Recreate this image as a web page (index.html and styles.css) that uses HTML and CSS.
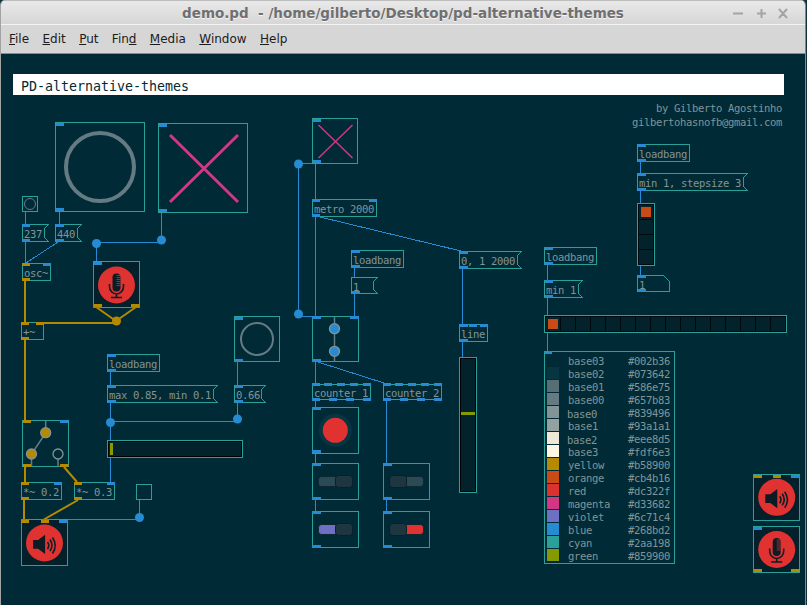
FILE: index.html
```html
<!DOCTYPE html>
<html lang="en">
<head>
<meta charset="utf-8">
<title>demo.pd - /home/gilberto/Desktop/pd-alternative-themes</title>
<link rel="stylesheet" href="styles.css">
</head>
<body>
<div class="window">
  <header class="titlebar">
    <span class="title">demo.pd&nbsp; - /home/gilberto/Desktop/pd-alternative-themes</span>
    <svg class="controls" width="60" height="12" viewBox="0 0 60 12">
      <path d="M0 6.500h10M24 6.500h9M28.500 2v9M46 2l8 9M54 2l-8 9"/>
    </svg>
  </header>
  <nav class="menubar">
    <span><u>F</u>ile</span>
    <span><u>E</u>dit</span>
    <span><u>P</u>ut</span>
    <span>Fin<u>d</u></span>
    <span><u>M</u>edia</span>
    <span><u>W</u>indow</span>
    <span><u>H</u>elp</span>
  </nav>
  <main class="canvas">
    <svg class="patch" width="807" height="551" viewBox="0 54 807 551">
      <defs>
        <g id="mic">
          <circle class="red" r="18.500"/>
          <rect class="glyph" x="-4" y="-11.500" width="8" height="18" rx="4"/>
          <path class="slits" d="M0 -9.500h4M0 -7.500h4M0 -5.500h4M0 -3.500h4M0 -1.500h4M0 .5h4"/>
          <path class="glyphline" d="M-7 -1v2.500a7 7.500 0 0 0 14 0v-2.500M0 9v3.500M-5.500 12.500h11"/>
        </g>
        <g id="speaker">
          <circle class="red" r="18.500"/>
          <path class="glyph" d="M-11.400 -3h5l7 -5.300v19.300l-7 -5.300h-5z"/>
          <path class="glypharc" d="M3 -1q2.500 3.500 0 7M5.500 -3.500q4 6 0 11.500M8 -5.500q5.500 8 0 16"/>
        </g>
      </defs>

      <!-- wires -->
      <path class="wire" d="M25.500 212V224M25.500 242V263M59.500 211V224M161.500 212V242M96.500 243V262M96 242.500H161M298.500 164V314M298 163.500H312M298 316.500H312M315.500 163V199M315.500 217V316M315.500 362V383M315.500 401V407M315.500 454V463M315.500 500V511M386.500 401V463M386.500 500V511M354.500 268V277M354.500 294V316M462.500 269V324M462.500 342V357M110.500 372V385M110.500 403V482M110 421.500H237M237.500 362V385M237.500 403V420M139.500 500V518M68 519.500H139M640.500 162V173M640.500 191V204M640.500 266V275M547.500 265V280M547.500 298V315M547.500 333V351"/>
      <path class="wire" d="M58 242L26 263M320 217L461 251M318 362L387 384"/>
      <path class="signal" d="M25 281V322M36 322.500H116M25 340V420M25 467V482M24 500V520"/>
      <path class="signal thin" d="M96 307L116 321M136 307L116 321M64 467L77 482M78 500L43 520"/>
      <circle class="dot" cx="161.500" cy="240" r="4.500"/>
      <circle class="dot" cx="96.500" cy="243.500" r="4.500"/>
      <circle class="dot" cx="298.500" cy="164" r="4.500"/>
      <circle class="dot" cx="298.500" cy="314" r="4.500"/>
      <circle class="dot" cx="110.500" cy="422.500" r="4.500"/>
      <circle class="dot" cx="237.500" cy="419" r="4.500"/>
      <circle class="dot" cx="139.500" cy="517.500" r="4.500"/>
      <circle class="dot gold" cx="116.500" cy="321" r="4.500"/>

      <!-- title -->
      <rect class="banner" x="13" y="74" width="771" height="21"/>
      <text class="bannertext" x="21" y="91">PD-alternative-themes</text>
      <text class="t end" x="782" y="112">by Gilberto Agostinho</text>
      <text class="t end" x="782" y="126">gilbertohasnofb@gmail.com</text>

      <!-- display canvases -->
      <rect class="box" x="55.500" y="122.500" width="89" height="89"/>
      <circle class="ring" cx="100" cy="167" r="34"/>
      <rect class="b" x="56" y="123" width="8" height="3"/><rect class="b" x="56" y="208" width="8" height="3"/>

      <rect class="box" x="158.500" y="123.500" width="89" height="89"/>
      <path class="cross" d="M170 135L238 202M238 135L170 202"/>
      <rect class="b" x="159" y="124" width="8" height="3"/><rect class="b" x="159" y="209" width="8" height="3"/>

      <rect class="box" x="22.500" y="196.500" width="15" height="15"/>
      <circle class="ring fine" cx="30" cy="204" r="5.500"/>

      <polygon class="box" points="22.500,224.500 48.500,224.500 44.500,228.500 44.500,237.500 48.500,241.500 22.500,241.500"/>
      <text class="t" x="24" y="238">237</text>
      <rect class="b" x="22" y="224" width="8" height="3"/><rect class="b" x="22" y="239" width="8" height="3"/>

      <polygon class="box" points="55.500,224.500 81.500,224.500 77.500,228.500 77.500,237.500 81.500,241.500 55.500,241.500"/>
      <text class="t" x="57" y="238">440</text>
      <rect class="b" x="56" y="224" width="8" height="3"/><rect class="b" x="56" y="239" width="8" height="3"/>

      <rect class="box" x="22.500" y="263.500" width="28" height="17"/>
      <text class="t" x="24" y="277">osc~</text>
      <rect class="g" x="22" y="263" width="8" height="3"/><rect class="b" x="43" y="263" width="8" height="3"/><rect class="g" x="22" y="278" width="8" height="3"/>

      <rect class="box dark" x="93.500" y="261.500" width="46" height="46"/>
      <use href="#mic" x="116.500" y="285"/>
      <rect class="b" x="94" y="262" width="8" height="3"/><rect class="g" x="94" y="304" width="8" height="3"/><rect class="g" x="131" y="304" width="8" height="3"/>

      <rect class="box" x="21.500" y="322.500" width="22" height="17"/>
      <text class="t" x="23" y="336">+~</text>
      <rect class="g" x="21" y="322" width="8" height="3"/><rect class="g" x="36" y="322" width="8" height="3"/><rect class="g" x="21" y="337" width="8" height="3"/>

      <rect class="box" x="234.500" y="316.500" width="45" height="45"/>
      <circle class="ring medium" cx="257" cy="339" r="16"/>
      <rect class="b" x="235" y="317" width="8" height="3"/><rect class="b" x="235" y="359" width="8" height="3"/>

      <rect class="box" x="107.500" y="354.500" width="52" height="17"/>
      <text class="t" x="109" y="368">loadbang</text>
      <rect class="b" x="108" y="354" width="8" height="3"/><rect class="b" x="108" y="369" width="8" height="3"/>

      <polygon class="box" points="107.500,385.500 217.500,385.500 213.500,389.500 213.500,398.500 217.500,402.500 107.500,402.500"/>
      <text class="t" x="109" y="399">max 0.85, min 0.1</text>
      <rect class="b" x="108" y="385" width="8" height="3"/><rect class="b" x="108" y="400" width="8" height="3"/>

      <polygon class="box" points="234.500,385.500 265.500,385.500 261.500,389.500 261.500,398.500 265.500,402.500 234.500,402.500"/>
      <text class="t" x="236" y="399">0.66</text>
      <rect class="b" x="235" y="385" width="8" height="3"/><rect class="b" x="235" y="400" width="8" height="3"/>

      <rect class="box" x="107.500" y="440.500" width="135" height="17"/>
      <rect class="well" x="108.500" y="441.500" width="133" height="15"/>
      <rect class="lime" x="110" y="443" width="3" height="12"/>

      <!-- switch -->
      <rect class="box" x="22.500" y="420.500" width="46" height="46"/>
      <path class="lever" d="M45.700 421V433L31.500 454V466M58 459V466"/>
      <circle class="knob gold" cx="45.700" cy="432.700" r="5"/>
      <circle class="knob gold" cx="31.500" cy="454" r="5"/>
      <circle class="knob" cx="58" cy="454" r="5"/>
      <rect class="g" x="23" y="420" width="8" height="3"/><rect class="b" x="60" y="420" width="8.500" height="3"/>
      <rect class="g" x="23" y="464" width="8" height="3"/><rect class="g" x="60" y="464" width="8.500" height="3"/>

      <rect class="box" x="21.500" y="482.500" width="40" height="17"/>
      <text class="t" x="23" y="496">*~ 0.2</text>
      <rect class="g" x="21" y="482" width="8" height="3"/><rect class="b" x="54" y="482" width="8" height="3"/><rect class="g" x="21" y="497" width="8" height="3"/>

      <rect class="box" x="74.500" y="482.500" width="40" height="17"/>
      <text class="t" x="76" y="496">*~ 0.3</text>
      <rect class="g" x="74" y="482" width="8" height="3"/><rect class="b" x="107" y="482" width="8" height="3"/><rect class="g" x="74" y="497" width="8" height="3"/>

      <rect class="box" x="136.500" y="484.500" width="15" height="15"/>

      <rect class="box dark" x="21.500" y="519.500" width="46" height="46"/>
      <use href="#speaker" x="44.500" y="543"/>
      <rect class="g" x="21" y="520" width="8" height="3"/><rect class="g" x="41" y="520" width="8" height="3"/><rect class="b" x="59" y="520" width="9" height="3"/>

      <!-- metro column -->
      <rect class="box" x="312.500" y="118.500" width="45" height="45"/>
      <path class="cross slim" d="M318.500 125L352.500 158M352.500 125L318.500 158"/>
      <rect class="b" x="313" y="119" width="8" height="3"/><rect class="b" x="313" y="160" width="8" height="3"/>

      <rect class="box" x="312.500" y="199.500" width="64" height="17"/>
      <text class="t" x="314" y="213">metro 2000</text>
      <rect class="b" x="312" y="199" width="8" height="3"/><rect class="b" x="369" y="199" width="8" height="3"/><rect class="b" x="312" y="214" width="8" height="3"/>

      <rect class="box" x="351.500" y="250.500" width="52" height="17"/>
      <text class="t" x="353" y="264">loadbang</text>
      <rect class="b" x="352" y="250" width="8" height="3"/><rect class="b" x="352" y="265" width="8" height="3"/>

      <polygon class="box" points="351.500,277.500 377.500,277.500 373.500,281.500 373.500,289.500 377.500,293.500 351.500,293.500"/>
      <text class="t" x="353" y="291">1</text>
      <rect class="b" x="352" y="291" width="8" height="3"/>

      <polygon class="box" points="459.500,251.500 521.500,251.500 517.500,255.500 517.500,264.500 521.500,268.500 459.500,268.500"/>
      <text class="t" x="461" y="265">0, 1 2000</text>
      <rect class="b" x="460" y="251" width="8" height="3"/><rect class="b" x="460" y="266" width="8" height="3"/>

      <rect class="box" x="459.500" y="324.500" width="28" height="17"/>
      <text class="t" x="461" y="338">line</text>
      <rect class="b" x="460" y="324" width="8" height="3"/><rect class="b" x="469" y="324" width="8" height="3"/><rect class="b" x="480" y="324" width="8" height="3"/><rect class="b" x="460" y="339" width="8" height="3"/>

      <rect class="box" x="312.500" y="316.500" width="46" height="45"/>
      <path class="lever" d="M334.500 317V362"/>
      <circle class="knob blue" cx="334.500" cy="328.700" r="5"/>
      <circle class="knob blue" cx="334.500" cy="351.300" r="5"/>
      <rect class="b" x="312" y="316" width="9" height="3"/><rect class="b" x="350" y="316" width="9" height="3"/><rect class="b" x="312" y="359" width="9" height="3"/>

      <rect class="box" x="312.500" y="384.500" width="58" height="15"/>
      <text class="t" x="314" y="397">counter 1</text>
      <path class="dash" d="M312 384.500h8M324 384.500h8M337 384.500h8M350 384.500h8M363 384.500h8M312 399.500h8M329 399.500h8M346 399.500h8M363 399.500h8"/>

      <rect class="box" x="383.500" y="384.500" width="58" height="15"/>
      <text class="t" x="385" y="397">counter 2</text>
      <path class="dash" d="M383 384.500h8M395 384.500h8M408 384.500h8M421 384.500h8M434 384.500h8M383 399.500h8M400 399.500h8M417 399.500h8M434 399.500h8"/>

      <rect class="box" x="312.500" y="407.500" width="46" height="46"/>
      <circle class="halo" cx="335.300" cy="430.300" r="16.500"/>
      <circle class="red" cx="335.300" cy="430.300" r="12.500"/>
      <rect class="b" x="312" y="407" width="9" height="3"/><rect class="b" x="312" y="450" width="9" height="3"/>

      <rect class="box" x="312.500" y="463.500" width="46" height="36"/>
      <rect class="track" x="318.500" y="476.500" width="33" height="10" rx="3"/>
      <rect class="thumb" x="335.500" y="475.500" width="17" height="12" rx="3"/>
      <rect class="b" x="312" y="463" width="9" height="3"/><rect class="b" x="312" y="497" width="9" height="3"/>

      <rect class="box" x="383.500" y="463.500" width="46" height="36"/>
      <rect class="track" x="390.500" y="476.500" width="33" height="10" rx="3"/>
      <rect class="thumb" x="389.500" y="475.500" width="17" height="12" rx="3"/>
      <rect class="b" x="383" y="463" width="9" height="3"/><rect class="b" x="383" y="497" width="9" height="3"/>

      <rect class="box" x="312.500" y="511.500" width="46" height="36"/>
      <rect class="track violet" x="318.500" y="524.500" width="33" height="10" rx="3"/>
      <rect class="thumb" x="335.500" y="523.500" width="17" height="12" rx="3"/>
      <rect class="b" x="312" y="511" width="9" height="3"/><rect class="b" x="312" y="545" width="9" height="3"/>

      <rect class="box" x="383.500" y="511.500" width="46" height="36"/>
      <rect class="track crimson" x="390.500" y="524.500" width="33" height="10" rx="3"/>
      <rect class="thumb" x="389.500" y="523.500" width="17" height="12" rx="3"/>
      <rect class="b" x="383" y="511" width="9" height="3"/><rect class="b" x="383" y="545" width="9" height="3"/>

      <!-- vslider -->
      <rect class="box" x="459.500" y="357.500" width="17" height="135"/>
      <rect class="well" x="460.500" y="358.500" width="15" height="133"/>
      <rect class="lime" x="461" y="412" width="14" height="3"/>

      <!-- right radios -->
      <rect class="box" x="637.500" y="144.500" width="52" height="17"/>
      <text class="t" x="639" y="158">loadbang</text>
      <rect class="b" x="638" y="144" width="8" height="3"/><rect class="b" x="638" y="159" width="8" height="3"/>

      <polygon class="box" points="637.500,173.500 747.500,173.500 743.500,177.500 743.500,186.500 747.500,190.500 637.500,190.500"/>
      <text class="t" x="639" y="187">min 1, stepsize 3</text>
      <rect class="b" x="638" y="173" width="8" height="3"/><rect class="b" x="638" y="188" width="8" height="3"/>

      <rect class="box" x="637.500" y="203.500" width="17" height="62"/>
      <rect class="cell" x="638.500" y="204.500" width="15" height="60"/>
      <path class="grid" d="M638.500 219.500h15M638.500 234.500h15M638.500 249.500h15"/>
      <rect class="orange" x="641" y="207" width="10" height="10"/>

      <polygon class="box" points="637.500,275.500 663.500,275.500 669.500,281.500 669.500,291.500 637.500,291.500"/>
      <text class="t" x="639" y="289">1</text>
      <rect class="b" x="638" y="275" width="8" height="3"/><rect class="b" x="638" y="289" width="8" height="3"/>

      <rect class="box" x="544.500" y="247.500" width="52" height="17"/>
      <text class="t" x="546" y="261">loadbang</text>
      <rect class="b" x="545" y="247" width="8" height="3"/><rect class="b" x="545" y="262" width="8" height="3"/>

      <polygon class="box" points="544.500,280.500 582.500,280.500 578.500,284.500 578.500,293.500 582.500,297.500 544.500,297.500"/>
      <text class="t" x="546" y="294">min 1</text>
      <rect class="b" x="545" y="280" width="8" height="3"/><rect class="b" x="545" y="295" width="8" height="3"/>

      <rect class="box" x="544.500" y="315.500" width="242" height="17"/>
      <rect class="cell" x="545.500" y="316.500" width="240" height="15"/>
      <path class="grid" d="M560.500 316.500v15M575.500 316.500v15M590.500 316.500v15M605.500 316.500v15M620.500 316.500v15M635.500 316.500v15M650.500 316.500v15M665.500 316.500v15M680.500 316.500v15M695.500 316.500v15M710.500 316.500v15M725.500 316.500v15M740.500 316.500v15M755.500 316.500v15M770.500 316.500v15"/>
      <rect class="orange" x="548" y="319" width="10" height="10"/>

      <!-- palette -->
      <rect class="box" x="544.500" y="351.500" width="130" height="212"/>
      <rect class="b" x="545" y="351" width="7" height="3"/>
      <rect x="547" y="354" width="12" height="12" fill="#002b36"/>
      <rect x="547" y="367" width="12" height="12" fill="#073642"/>
      <rect x="547" y="380" width="12" height="12" fill="#586e75"/>
      <rect x="547" y="393" width="12" height="12" fill="#657b83"/>
      <rect x="547" y="406" width="12" height="12" fill="#839496"/>
      <rect x="547" y="419" width="12" height="12" fill="#93a1a1"/>
      <rect x="547" y="432" width="12" height="12" fill="#eee8d5"/>
      <rect x="547" y="445" width="12" height="12" fill="#fdf6e3"/>
      <rect x="547" y="458" width="12" height="12" fill="#b58900"/>
      <rect x="547" y="471" width="12" height="12" fill="#cb4b16"/>
      <rect x="547" y="484" width="12" height="12" fill="#dc322f"/>
      <rect x="547" y="497" width="12" height="12" fill="#d33682"/>
      <rect x="547" y="510" width="12" height="12" fill="#6c71c4"/>
      <rect x="547" y="523" width="12" height="12" fill="#268bd2"/>
      <rect x="547" y="536" width="12" height="12" fill="#2aa198"/>
      <rect x="547" y="549" width="12" height="12" fill="#859900"/>
      <text class="t" x="568" y="365">base03</text><text class="t" x="628" y="365">#002b36</text>
      <text class="t" x="568" y="378">base02</text><text class="t" x="628" y="378">#073642</text>
      <text class="t" x="568" y="391">base01</text><text class="t" x="628" y="391">#586e75</text>
      <text class="t" x="568" y="404">base00</text><text class="t" x="628" y="404">#657b83</text>
      <text class="t" x="567" y="418">base0</text><text class="t" x="628" y="417">#839496</text>
      <text class="t" x="568" y="430">base1</text><text class="t" x="628" y="430">#93a1a1</text>
      <text class="t" x="567" y="444">base2</text><text class="t" x="628" y="443">#eee8d5</text>
      <text class="t" x="568" y="456">base3</text><text class="t" x="628" y="456">#fdf6e3</text>
      <text class="t" x="568" y="469">yellow</text><text class="t" x="628" y="469">#b58900</text>
      <text class="t" x="568" y="482">orange</text><text class="t" x="628" y="482">#cb4b16</text>
      <text class="t" x="568" y="495">red</text><text class="t" x="628" y="495">#dc322f</text>
      <text class="t" x="568" y="508">magenta</text><text class="t" x="628" y="508">#d33682</text>
      <text class="t" x="568" y="521">violet</text><text class="t" x="628" y="521">#6c71c4</text>
      <text class="t" x="568" y="534">blue</text><text class="t" x="628" y="534">#268bd2</text>
      <text class="t" x="568" y="547">cyan</text><text class="t" x="628" y="547">#2aa198</text>
      <text class="t" x="568" y="560">green</text><text class="t" x="628" y="560">#859900</text>

      <!-- spare dsp icons -->
      <rect class="box dark" x="753.500" y="474.500" width="46" height="46"/>
      <use href="#speaker" x="776.700" y="497.300"/>
      <rect class="g" x="754" y="475" width="8" height="3"/><rect class="g" x="773" y="475" width="8" height="3"/><rect class="b" x="791" y="475" width="9" height="3"/>

      <rect class="box dark" x="753.500" y="526.500" width="46" height="46"/>
      <use href="#mic" x="776.700" y="549.500"/>
      <rect class="b" x="754" y="527" width="8" height="3"/><rect class="g" x="754" y="569" width="8" height="3"/><rect class="g" x="791" y="569" width="9" height="3"/>
    </svg>
  </main>
</div>
</body>
</html>
```
FILE: styles.css
```css
* { box-sizing: border-box; }
html, body { margin: 0; height: 100%; background: #12313c; overflow: hidden; }
.window {
  width: 806px;
  height: 605px;
  display: flex;
  flex-direction: column;
  border-left: 1px solid #a3a3a3;
  border-right: 1px solid #7c8a8f;
  border-radius: 5px 5px 0 0;
  overflow: hidden;
}
.titlebar {
  height: 25px;
  flex: none;
  display: flex;
  align-items: center;
  justify-content: center;
  position: relative;
  background: linear-gradient(#e9e9e9, #d6d6d6);
  border-top: 1px solid #bdbdbd;
  border-bottom: 1px solid #f4f4f4;
}
.title {
  font: bold 13.500px "DejaVu Sans", sans-serif;
  color: #6f6f6f;
  text-shadow: 0 1px 0 #f5f5f5;
  white-space: pre;
}
.controls {
  position: absolute;
  right: 12px;
  top: 6px;
}
.controls path { stroke: #a4a4a4; stroke-width: 2; fill: none; }
.menubar {
  height: 29px;
  flex: none;
  display: flex;
  align-items: center;
  gap: 13.400px;
  padding: 0 0 0 8px;
  background: #d6d6d6;
  border-bottom: 1px solid #8b8b8b;
  font: 12px "DejaVu Sans", sans-serif;
  color: #1c1c1c;
}
.canvas { flex: 1; background: #002b36; min-height: 0; margin-left: -1px; }
.patch { display: block; }

.box { fill: none; stroke: #2aa198; stroke-width: 1; shape-rendering: crispEdges; }
.box.dark { fill: #04202a; }
.wire { fill: none; stroke: #268bd2; stroke-width: 1; shape-rendering: crispEdges; }
.signal { fill: none; stroke: #b58900; stroke-width: 2; shape-rendering: crispEdges; }
.signal.thin { stroke-width: 2; shape-rendering: auto; }
.dot { fill: #268bd2; }
.dot.gold { fill: #b58900; }
.b { fill: #268bd2; }
.g { fill: #b58900; }
.t {
  font: 10.500px "DejaVu Sans Mono", monospace;
  letter-spacing: -.32px;
  fill: #839496;
}
.t.end { text-anchor: end; }
.banner { fill: #ffffff; }
.bannertext { font: 13.300px "DejaVu Sans Mono", monospace; fill: #002b36; }
.ring { fill: none; stroke: #657b83; stroke-width: 4; }
.ring.fine { stroke-width: 1; }
.ring.medium { stroke-width: 2; }
.cross { fill: none; stroke: #d33682; stroke-width: 3; }
.cross.slim { stroke-width: 1.500; }
.red { fill: #e03230; }
.glyph { fill: #0b1c25; }
.glyphline, .glypharc { fill: none; stroke: #0b1c25; stroke-width: 1.600; }
.slits { stroke: #e03230; stroke-width: .7; fill: none; }
.lever { fill: none; stroke: #657b83; stroke-width: 1.500; }
.knob { fill: #002b36; stroke: #839496; stroke-width: 1.300; }
.knob.gold { fill: #b58900; }
.knob.blue { fill: #268bd2; }
.well { fill: #04222c; stroke: #000000; stroke-width: 1; shape-rendering: crispEdges; }
.lime { fill: #859900; }
.dash { fill: none; stroke: #268bd2; stroke-width: 3; shape-rendering: crispEdges; }
.halo { fill: #073642; }
.track { fill: #2a4a56; stroke: #0f2730; stroke-width: 1; }
.track.violet { fill: #6c71c4; }
.track.crimson { fill: #e03230; }
.thumb { fill: #1d3640; stroke: #0a1f28; stroke-width: 1; }
.cell { fill: #04222c; stroke: #000a0e; stroke-width: 1; shape-rendering: crispEdges; }
.grid { fill: none; stroke: #000a0e; stroke-width: 1; shape-rendering: crispEdges; }
.orange { fill: #cb4b16; }
```
